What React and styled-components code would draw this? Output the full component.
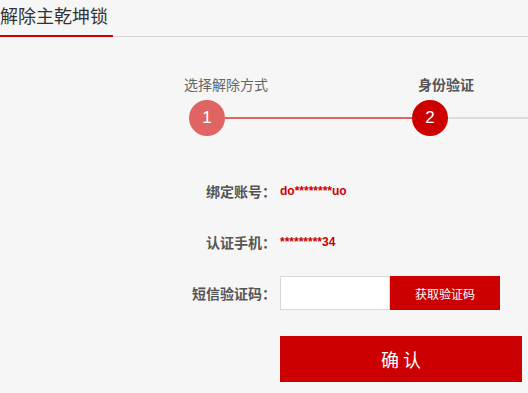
import React from 'react'
import styled, { createGlobalStyle } from 'styled-components'

const Global = createGlobalStyle`
  html, body {
    margin: 0;
    padding: 0;
    background: #f6f6f6;
  }
  body {
    font-family: "Noto Sans CJK SC", "Liberation Sans", sans-serif;
  }
`

const Page = styled.div`
  width: 528px;
  height: 393px;
  overflow: hidden;
  background: #f6f6f6;
`

const Header = styled.div`
  height: 36px;
  border-bottom: 1px solid #d4d4d4;
  display: flex;
`

const Tab = styled.div`
  box-sizing: border-box;
  height: 37px;
  width: 113px;
  border-bottom: 2px solid #cc0000;
  font-size: 18px;
  line-height: 30px;
  color: #333;
  white-space: nowrap;
`

const Steps = styled.div`
  display: flex;
  padding-left: 189px;
  margin-top: 37px;
`

const Step = styled.div`
  display: flex;
  flex-direction: column;
  width: ${p => (p.$grow ? 'auto' : p.$w + 'px')};
  flex: ${p => (p.$grow ? 1 : 'none')};
`

const StepLabel = styled.div`
  font-size: 14px;
  line-height: 20px;
  height: 20px;
  margin-left: ${p => p.$offset}px;
  color: ${p => (p.$active ? '#555' : '#666')};
  font-weight: ${p => (p.$active ? 'bold' : 'normal')};
  white-space: nowrap;
`

const Node = styled.div`
  display: flex;
  align-items: center;
  margin-top: 6px;
`

const Circle = styled.div`
  width: 36px;
  height: 36px;
  border-radius: 50%;
  background: ${p => p.$color};
  color: #fff;
  font-family: "Liberation Sans", Arial, sans-serif;
  font-size: 17px;
  display: flex;
  align-items: center;
  justify-content: center;
  flex: none;
`

const Line = styled.div`
  flex: 1;
  height: 2px;
  background: ${p => p.$color};
`

const Form = styled.div`
  display: grid;
  grid-template-columns: 276px auto;
  column-gap: 4px;
  row-gap: 17px;
  margin-top: 38px;
  align-items: center;
`

const Label = styled.div`
  text-align: right;
  font-size: 14px;
  font-weight: bold;
  color: #555;
  height: 34px;
  line-height: 34px;
  white-space: nowrap;
`

const Value = styled.div`
  font-family: "Liberation Sans", Arial, sans-serif;
  font-size: 12px;
  font-weight: bold;
  color: #cc0000;
`

const CodeRow = styled.div`
  display: flex;
`

const Input = styled.input`
  box-sizing: border-box;
  width: 110px;
  height: 34px;
  border: 1px solid #d8d8d8;
  background: #fff;
  outline: none;
  margin: 0;
  padding: 0 6px;
`

const SendButton = styled.button`
  width: 110px;
  height: 34px;
  border: none;
  margin: 0;
  background: #cc0000;
  color: #fff;
  font-family: "Noto Sans CJK SC", sans-serif;
  font-size: 12px;
  cursor: pointer;
`

const Confirm = styled.button`
  grid-column: 2;
  margin: 9px 0 0;
  width: 242px;
  height: 46px;
  border: none;
  padding: 0;
  background: #cc0000;
  color: #fff;
  font-family: "Noto Sans CJK SC", sans-serif;
  font-size: 18px;
  cursor: pointer;
`

export default function App() {
  return (
    <Page>
      <Global />
      <Header>
        <Tab>解除主乾坤锁</Tab>
      </Header>
      <Steps>
        <Step $w={223}>
          <StepLabel $offset={-5}>选择解除方式</StepLabel>
          <Node>
            <Circle $color="#e06464">1</Circle>
            <Line $color="#e06464" />
          </Node>
        </Step>
        <Step $grow>
          <StepLabel $offset={6} $active>身份验证</StepLabel>
          <Node>
            <Circle $color="#cc0000">2</Circle>
            <Line $color="#dcdcdc" />
          </Node>
        </Step>
      </Steps>
      <Form>
        <Label>绑定账号：</Label>
        <Value>do********uo</Value>
        <Label>认证手机：</Label>
        <Value>*********34</Value>
        <Label>短信验证码：</Label>
        <CodeRow>
          <Input type="text" />
          <SendButton>获取验证码</SendButton>
        </CodeRow>
        <Confirm>确 认</Confirm>
      </Form>
    </Page>
  )
}
